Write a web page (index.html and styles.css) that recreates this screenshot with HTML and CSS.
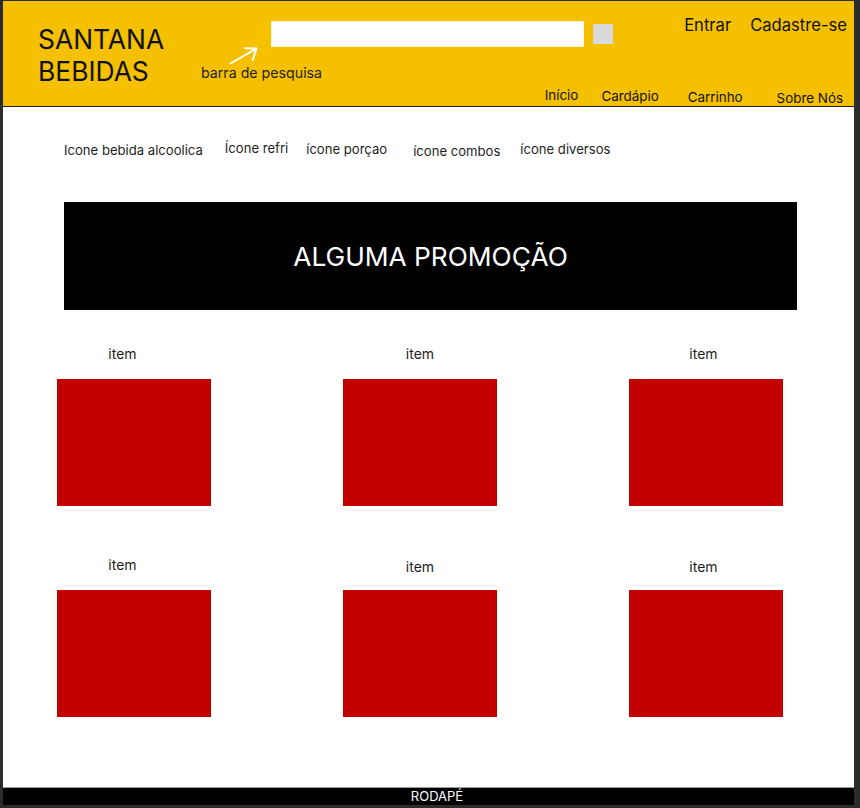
FILE: index.html
```html
<!DOCTYPE html>
<html lang="pt-BR">
<head>
<meta charset="utf-8">
<title>Santana Bebidas</title>
<link rel="stylesheet" href="styles.css">
</head>
<body>
<div class="frame">
  <header class="header">
    <div class="brand">SANTANA<br>BEBIDAS</div>
    <div class="header-main">
      <div class="top-row">
        <div class="search-group">
          <div class="search-row">
            <div class="search-input"></div>
            <div class="search-btn"></div>
          </div>
          <svg class="arrow" width="30" height="17" viewBox="0 0 30 17">
            <path d="M1.5 16.5 L27.5 1.5 M16 1.2 L27.5 1.5 L23.7 13" fill="none" stroke="#fff" stroke-width="2" stroke-linecap="round" stroke-linejoin="round"/>
          </svg>
          <div class="caption">barra de pesquisa</div>
        </div>
        <div class="auth">
          <span>Entrar</span>
          <span>Cadastre-se</span>
        </div>
      </div>
      <nav class="nav">
        <span class="nav-item n1">Início</span>
        <span class="nav-item n2">Cardápio</span>
        <span class="nav-item n3">Carrinho</span>
        <span class="nav-item n4">Sobre Nós</span>
      </nav>
    </div>
  </header>

  <main class="main">
    <div class="categories">
      <span class="cat c1">Icone bebida alcoolica</span>
      <span class="cat c2">Ícone refri</span>
      <span class="cat c3">ícone porçao</span>
      <span class="cat c4">ícone combos</span>
      <span class="cat c5">ícone diversos</span>
    </div>

    <div class="banner">ALGUMA PROMOÇÃO</div>

    <div class="items">
      <div class="item col1"><div class="item-label">item</div><div class="item-box"></div></div>
      <div class="item col2"><div class="item-label">item</div><div class="item-box"></div></div>
      <div class="item col3"><div class="item-label">item</div><div class="item-box"></div></div>
      <div class="item col1"><div class="item-label">item</div><div class="item-box"></div></div>
      <div class="item col2 low"><div class="item-label">item</div><div class="item-box"></div></div>
      <div class="item col3 low"><div class="item-label">item</div><div class="item-box"></div></div>
    </div>
  </main>

  <footer class="footer">RODAPÉ</footer>
</div>
</body>
</html>
```

FILE: styles.css
```css
* { box-sizing: border-box; }

html, body {
  margin: 0;
  padding: 0;
}

body {
  background: #2c2c2c;
  padding: 1px 6px 3px 3px;
  font-family: Inter, "Liberation Sans", sans-serif;
  color: #1e1e1e;
}

.frame {
  width: 851px;
  height: 804px;
  background: #ffffff;
  display: flex;
  flex-direction: column;
}

/* Header */
.header {
  height: 106px;
  background: #f5c000;
  border-bottom: 1px solid #1e1e1e;
  display: flex;
  flex: none;
}

.brand {
  width: 198px;
  padding: 23px 0 0 35px;
  font-size: 26.4px;
  line-height: 31.5px;
  color: #111;
  flex: none;
}

.header-main {
  flex: 1;
  display: flex;
  flex-direction: column;
  justify-content: space-between;
}

.top-row {
  display: flex;
  align-items: flex-start;
}

.search-group {
  padding-top: 20px;
  display: flex;
  flex-direction: column;
}

.search-row {
  display: flex;
  align-items: flex-start;
}

.search-input {
  margin-left: 70px;
  width: 313px;
  height: 26px;
  background: #ffffff;
  border: 1px solid #fff7d6;
}

.search-btn {
  margin: 3px 0 0 9px;
  width: 20px;
  height: 20px;
  background: #d9d9d9;
}

.arrow {
  display: block;
  margin-left: 28px;
  overflow: visible;
}

.caption {
  font-size: 14.2px;
  line-height: 17px;
  color: #1e1e1e;
}

.auth {
  margin-left: auto;
  padding: 14px 7px 0 0;
  display: flex;
  gap: 19px;
  font-size: 16.6px;
  line-height: 20px;
  color: #111;
}

.nav {
  display: flex;
  justify-content: flex-end;
  align-items: flex-end;
  padding-right: 11px;
  font-size: 13.4px;
  line-height: 16px;
  color: #111;
}

.nav-item { margin-left: 23px; }
.nav-item.n1 { margin-bottom: 3px; }
.nav-item.n2 { margin-bottom: 2px; }
.nav-item.n3 { margin-bottom: 1px; margin-left: 29px; }
.nav-item.n4 { margin-bottom: 0; margin-left: 34px; }

/* Main */
.main {
  flex: 1;
  padding-top: 32px;
}

.categories {
  display: flex;
  align-items: flex-start;
  height: 21px;
  padding-left: 61px;
  font-size: 13.1px;
  line-height: 17px;
  color: #1e1e1e;
}

.cat.c1 { margin-top: 3px; }
.cat.c2 { margin-top: 1px; margin-left: 22px; }
.cat.c3 { margin-top: 2px; margin-left: 18px; }
.cat.c4 { margin-top: 4px; margin-left: 26px; }
.cat.c5 { margin-top: 2px; margin-left: 20px; }

.banner {
  margin: 42px 0 0 61px;
  width: 733px;
  height: 108px;
  background: #000;
  color: #fff;
  font-size: 26.3px;
  display: flex;
  align-items: center;
  justify-content: center;
}

.items {
  margin: 35px 0 0 54px;
  display: grid;
  grid-template-columns: repeat(3, 154px);
  column-gap: 132px;
  row-gap: 50px;
}

.item-label {
  font-size: 14px;
  line-height: 17px;
  text-align: center;
  margin-bottom: 17px;
  color: #1e1e1e;
}

.item.col1 .item-label { padding-right: 23px; }
.item.col3 .item-label { padding-right: 5px; }
.item.low .item-label { margin-top: 2px; margin-bottom: 15px; }

.item-box {
  width: 154px;
  height: 127px;
  background: #c30000;
}

/* Footer */
.footer {
  flex: none;
  height: 18px;
  background: #000;
  border-top: 1px solid #9a9a9a;
  color: #fff;
  font-size: 13px;
  line-height: 17px;
  text-align: center;
  padding-left: 17px;
}
```
